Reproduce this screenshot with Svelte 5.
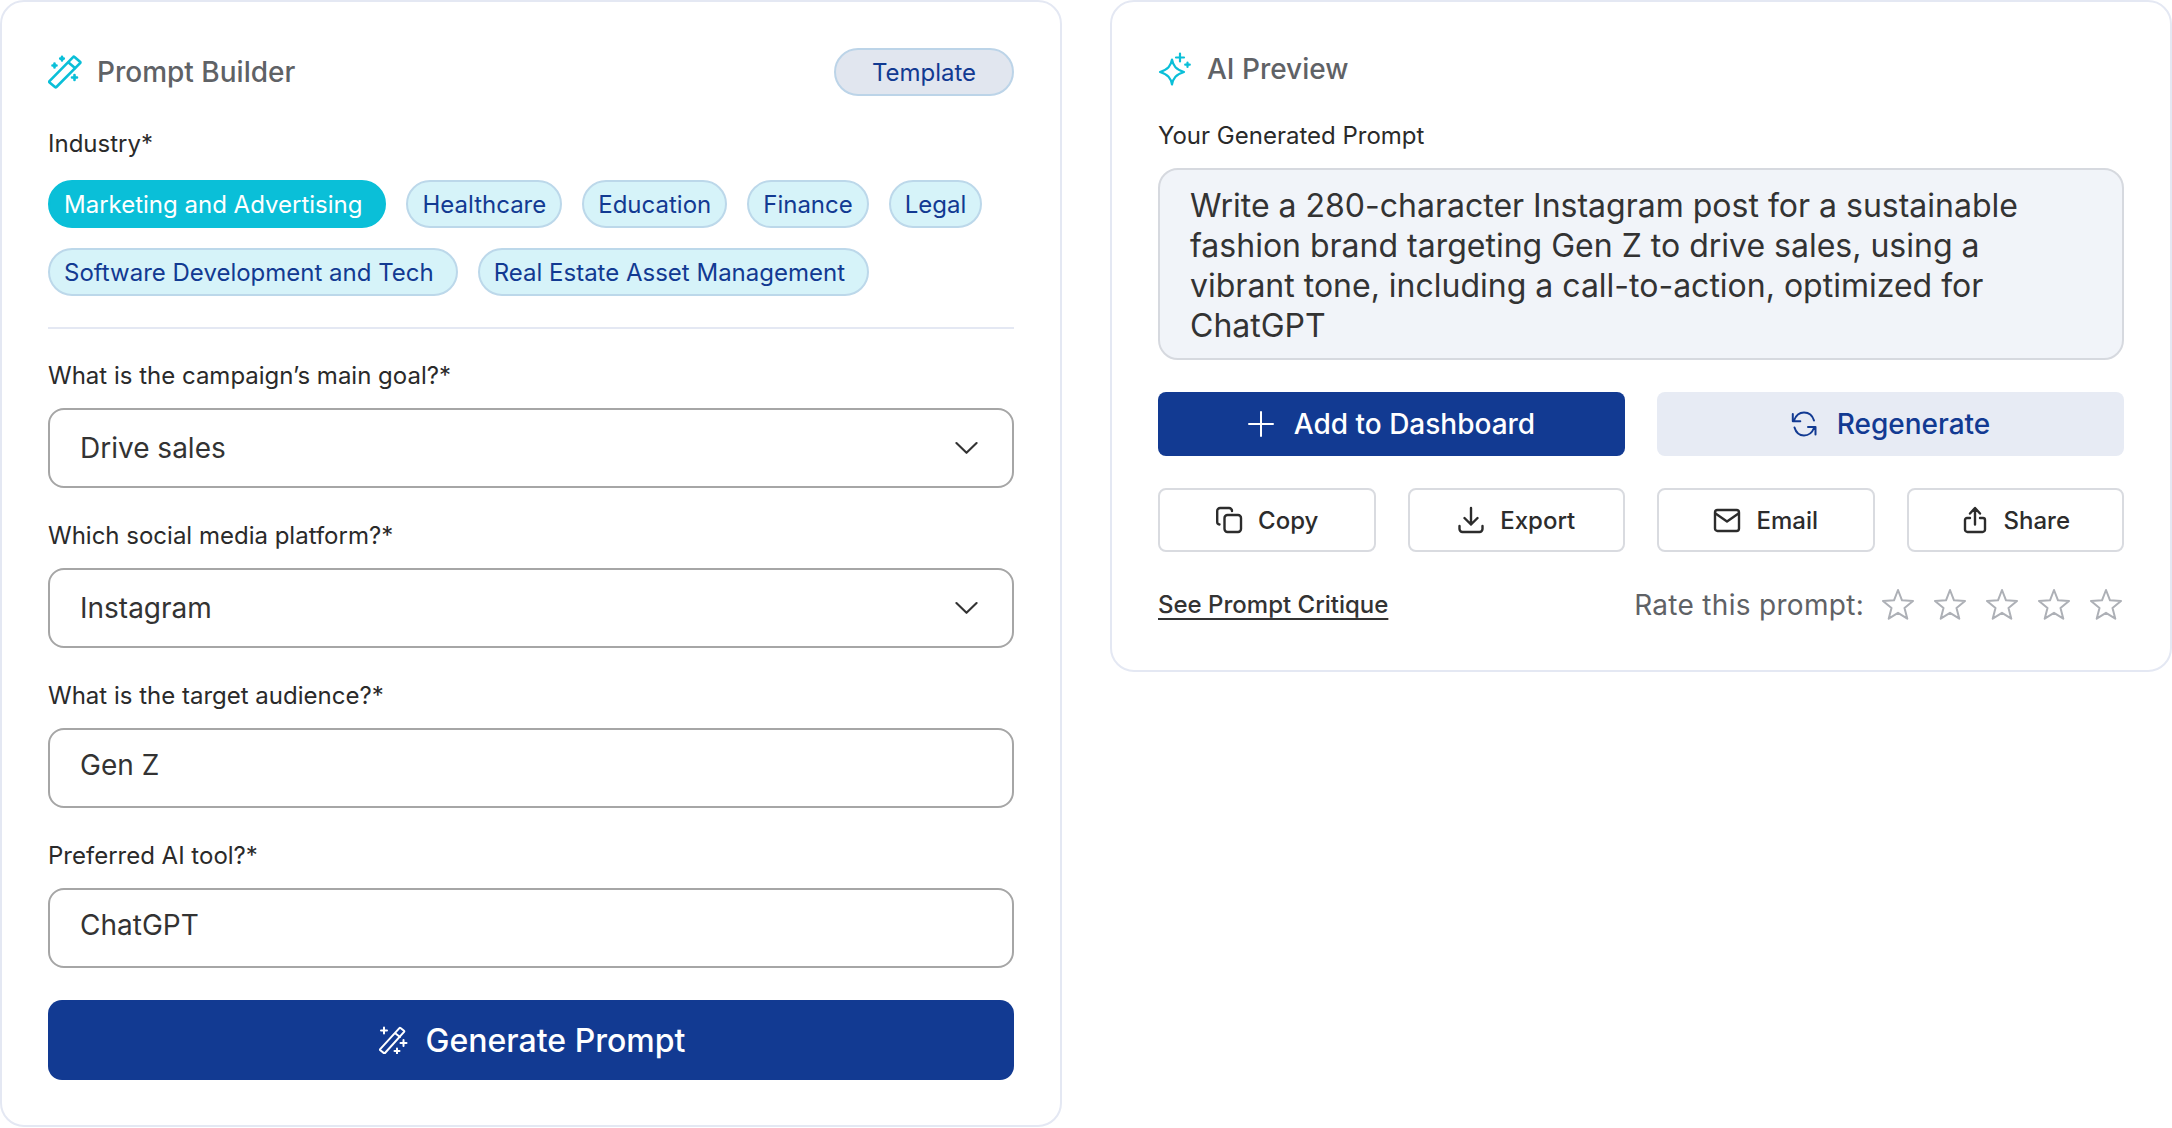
<script lang="ts">
	// Prompt builder form with the generated AI preview beside it
	const industries = [
		{ name: 'Marketing and Advertising', long: true },
		{ name: 'Healthcare', long: false },
		{ name: 'Education', long: false },
		{ name: 'Finance', long: false },
		{ name: 'Legal', long: false },
		{ name: 'Software Development and Tech', long: true },
		{ name: 'Real Estate Asset Management', long: true }
	];

	const fields = [
		{ label: 'What is the campaign’s main goal?*', value: 'Drive sales', select: true },
		{ label: 'Which social media platform?*', value: 'Instagram', select: true },
		{ label: 'What is the target audience?*', value: 'Gen Z', select: false },
		{ label: 'Preferred AI tool?*', value: 'ChatGPT', select: false }
	];

	const actions = ['Copy', 'Export', 'Email', 'Share'];
	const stars = [1, 2, 3, 4, 5];
</script>

{#snippet actionIcon(name: string)}
	<svg class="action-icon" viewBox="0 0 28 28" fill="none" stroke="currentColor" stroke-width="2.4" stroke-linecap="round" stroke-linejoin="round">
		{#if name === 'Copy'}
			<rect x="9.500" y="9" width="16.500" height="17" rx="3" />
			<path d="M4.500 18.500A2.500 2.500 0 0 1 2.200 16V5a3 3 0 0 1 3-3h8.800a3 3 0 0 1 3 3" />
		{:else if name === 'Export'}
			<path d="M14 2v16.500M7.500 12l6.500 6.500 6.500-6.500M2.500 20v3a3 3 0 0 0 3 3h17a3 3 0 0 0 3-3v-3" />
		{:else if name === 'Email'}
			<rect x="2" y="4" width="24" height="21" rx="2.500" />
			<path d="M2.500 7.500 14 15.500l11.500-8" />
		{:else}
			<path d="M14 18.500V2.500M9 7.500l5-5.500 5 5.500M9 12H6a2 2 0 0 0-2 2v9.500A2.500 2.500 0 0 0 6.500 26h15a2.500 2.500 0 0 0 2.500-2.500V14a2 2 0 0 0-2-2h-3" />
		{/if}
	</svg>
{/snippet}

<main class="page">
	<section class="card builder">
		<header class="builder-head">
			<div class="title-group">
				<svg class="title-icon" viewBox="0 0 34 34" fill="none" stroke="currentColor" stroke-width="2.600" stroke-linejoin="round" stroke-linecap="round">
					<path d="M26.500 2 32 6.800a1 1 0 0 1 .1 1.400L8.400 32a1 1 0 0 1-1.400.1L1.600 27.500a1 1 0 0 1-.1-1.400L25.100 2.100a1 1 0 0 1 1.400-.1Z" />
					<path d="M20.500 7.500l6.500 5.500" />
					<path d="M14 1.800v3.600M12.200 3.600h3.600M6.500 8.500v4M4.500 10.500h4M26.500 20v5M24 22.500h5" />
				</svg>
				<h2>Prompt Builder</h2>
			</div>
			<button class="template">Template</button>
		</header>

		<p class="label industry-label">Industry*</p>
		<div class="chips">
			{#each industries as industry, i}
				<button class="chip" class:long={industry.long} class:active={i === 0}>{industry.name}</button>
			{/each}
		</div>
		<hr />

		<div class="fields">
			{#each fields as field}
				<div class="field">
					<p class="label">{field.label}</p>
					<div class="control" class:is-input={!field.select}>
						<span>{field.value}</span>
						{#if field.select}
							<svg class="chevron" viewBox="0 0 24 14" fill="none" stroke="currentColor" stroke-width="2.200" stroke-linecap="round" stroke-linejoin="round">
								<path d="M1.500 1.800 12 12 22.500 1.800" />
							</svg>
						{/if}
					</div>
				</div>
			{/each}
		</div>

		<button class="generate">
			<svg class="generate-icon" viewBox="0 0 32 28" fill="none" stroke="currentColor" stroke-width="2" stroke-linejoin="round" stroke-linecap="round">
				<path d="M23.500 2 27 4.800a.8.8 0 0 1 .1 1.100L8 27a.8.8 0 0 1-1.100.1L3.300 24.300a.8.8 0 0 1-.1-1.100L22.400 2.100a.8.8 0 0 1 1.100-.1Z" />
				<path d="M18.500 7.500l4.500 3.500" />
				<path d="M7 1.500v6M4 4.500h6M26.500 14v6M23.500 17h6M20 22.500v5M17.500 25h5" />
			</svg>
			Generate Prompt
		</button>
	</section>

	<section class="card preview">
		<header class="title-group">
			<svg class="title-icon" viewBox="0 0 34 34" fill="none" stroke="currentColor" stroke-width="2.200" stroke-linejoin="round" stroke-linecap="round">
				<path d="M14 7.500c1.200 6.500 4 10 12 12.500-8 2.500-10.800 6-12 12.500-1.200-6.500-4-10-12-12.500 8-2.500 10.800-6 12-12.500Z" />
				<path d="M22 1.500v8M18 5.500h8M29.500 10.500v4.500M27.200 12.700h4.600" />
			</svg>
			<h2>AI Preview</h2>
		</header>

		<p class="label preview-label">Your Generated Prompt</p>
		<div class="prompt">
			Write a 280-character Instagram post for a sustainable fashion brand targeting Gen Z to drive sales, using a vibrant tone, including a call-to-action, optimized for ChatGPT
		</div>

		<div class="main-actions">
			<button class="btn primary">
				<svg class="btn-icon" viewBox="0 0 26 26" fill="none" stroke="currentColor" stroke-width="2" stroke-linecap="round"><path d="M13 1v24M1 13h24" /></svg>
				Add to Dashboard
			</button>
			<button class="btn soft">
				<svg class="btn-icon" viewBox="0 0 26 26" fill="none" stroke="currentColor" stroke-width="2" stroke-linecap="round" stroke-linejoin="round">
					<path d="M23 9.500C21.500 4.500 17.500 1.500 13 1.500S5 4 3 9.500M1.800 3v7.300h7.500M3.500 16.500C5 21.500 8.500 24.500 13 24.500s8-2.500 10-7.500M24.500 23.500V16h-7.500" />
				</svg>
				Regenerate
			</button>
		</div>

		<div class="actions">
			{#each actions as action}
				<button class="btn outline">
					{@render actionIcon(action)}
					{action}
				</button>
			{/each}
		</div>

		<div class="foot">
			<a href="#critique" class="critique">See Prompt Critique</a>
			<div class="rating">
				<span>Rate this prompt:</span>
				<div class="stars">
					{#each stars as star (star)}
						<svg class="star" viewBox="0 0 32 32" fill="none" stroke="currentColor" stroke-width="2" stroke-linejoin="round">
							<path d="m16 2 4 10.300 11 .7-8.500 7 2.800 10.700L16 24.800l-9.300 5.900L9.500 20 1 13l11-.7L16 2Z" />
						</svg>
					{/each}
				</div>
			</div>
		</div>
	</section>
</main>

<style>
	:global(body) {
		background: #fff;
	}

	.page {
		display: grid;
		grid-template-columns: 1062px 1062px;
		gap: 48px;
		align-items: start;
		font-family: Inter, 'Liberation Sans', sans-serif;
		color: #2a2a2a;
	}

	.card {
		box-sizing: border-box;
		background: #fff;
		border: 2px solid #e4e8f3;
		border-radius: 24px;
		padding: 0 46px;
	}

	.builder {
		height: 1127px;
		padding-top: 46px;
	}

	.preview {
		height: 672px;
		padding-top: 50px;
	}

	p {
		margin: 0;
	}

	button {
		font-family: inherit;
		cursor: pointer;
	}

	h2 {
		margin: 0;
		font-size: 28px;
		font-weight: 500;
		line-height: 32px;
		color: #5f6266;
	}

	.builder-head {
		display: flex;
		justify-content: space-between;
		align-items: center;
	}

	.title-group {
		display: flex;
		align-items: center;
		gap: 15px;
	}

	.title-icon {
		width: 34px;
		height: 34px;
		color: #0abfd8;
	}

	.template {
		box-sizing: border-box;
		width: 180px;
		height: 48px;
		padding: 0;
		border: 2px solid #bcd4e8;
		border-radius: 24px;
		background: #e1e6ef;
		color: #123a92;
		font-size: 24px;
	}

	.label {
		font-size: 24px;
		line-height: 32px;
		color: #2a2a2a;
	}

	.industry-label {
		margin: 32px 0 20px;
	}

	.chips {
		display: flex;
		flex-wrap: wrap;
		gap: 20px;
	}

	.chip {
		box-sizing: border-box;
		height: 48px;
		padding: 0 14px;
		border: 2px solid #bcd8ea;
		border-radius: 24px;
		background: #d6f3f9;
		color: #123a92;
		font-size: 24px;
	}

	.chip.long {
		padding-right: 22px;
	}

	.chip.active {
		border-color: #0abfd8;
		background: #0abfd8;
		color: #fff;
	}

	hr {
		margin: 31px 0 31px;
		border: 0;
		border-top: 2px solid #e4e8f3;
	}

	.fields {
		display: flex;
		flex-direction: column;
		gap: 32px;
	}

	.label + .control {
		margin-top: 16px;
	}

	.control {
		box-sizing: border-box;
		display: flex;
		justify-content: space-between;
		align-items: center;
		height: 80px;
		padding: 0 34px 0 30px;
		border: 2px solid #a6a6a6;
		border-radius: 16px;
		font-size: 28px;
		color: #333;
	}

	.control.is-input {
		padding-bottom: 6px;
	}

	.chevron {
		width: 23px;
		height: 14px;
	}

	.generate {
		display: flex;
		justify-content: center;
		align-items: center;
		gap: 17px;
		width: 100%;
		height: 80px;
		margin-top: 32px;
		border: 0;
		border-radius: 14px;
		background: #123a92;
		color: #fff;
		font-size: 32px;
		font-weight: 500;
	}

	.generate-icon {
		width: 32px;
		height: 28px;
	}

	.preview-label {
		margin: 34px 0 16px;
	}

	.prompt {
		box-sizing: border-box;
		height: 192px;
		padding: 16px 30px;
		border: 2px solid #d6d9df;
		border-radius: 20px;
		background: #f1f4f9;
		font-size: 32px;
		line-height: 40px;
		color: #333;
	}

	.main-actions {
		display: grid;
		grid-template-columns: 1fr 1fr;
		gap: 32px;
		margin-top: 32px;
	}

	.actions {
		display: grid;
		grid-template-columns: repeat(4, 1fr);
		gap: 32px;
		margin-top: 32px;
	}

	.btn {
		box-sizing: border-box;
		display: flex;
		justify-content: center;
		align-items: center;
		gap: 20px;
		height: 64px;
		padding: 0;
		border: 0;
		border-radius: 8px;
		font-size: 28px;
		font-weight: 500;
	}

	.btn-icon {
		width: 26px;
		height: 26px;
	}

	.primary {
		background: #123a92;
		color: #fff;
	}

	.soft {
		background: #e7ebf4;
		color: #123a92;
	}

	.outline {
		gap: 15px;
		border: 2px solid #d9dbe0;
		background: #fff;
		color: #2c2c2c;
		font-size: 24px;
	}

	.action-icon {
		width: 28px;
		height: 28px;
	}

	.foot {
		display: flex;
		justify-content: space-between;
		align-items: center;
		margin-top: 34px;
	}

	.critique {
		font-size: 24px;
		font-weight: 500;
		color: #333;
		text-decoration: underline;
		text-underline-offset: 5px;
	}

	.rating {
		display: flex;
		align-items: center;
		gap: 18px;
		margin-right: 2px;
		font-size: 28px;
		letter-spacing: 0.3px;
		color: #5f6266;
	}

	.rating span {
		padding-top: 2px;
	}

	.stars {
		display: flex;
		gap: 20px;
		color: #adb0b6;
	}

	.star {
		width: 32px;
		height: 32px;
	}
</style>
